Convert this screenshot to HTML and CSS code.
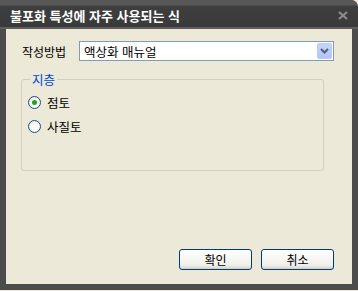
FILE: index.html
```html
<!DOCTYPE html>
<html lang="ko">
<head>
    <meta charset="UTF-8">
    <title>불포화 특성에 자주 사용되는 식</title>
    <link rel="stylesheet" href="styles.css">
</head>
<body>
    <div class="window">
        <div class="titlebar">
            <span class="title">불포화 특성에 자주 사용되는 식</span>
            <svg class="close" width="10" height="9" viewBox="0 0 10 9"><path d="M1 1 L9 8 M9 1 L1 8" stroke="#8c8c8c" stroke-width="2.2"/></svg>
        </div>
        <div class="client">
            <div class="row">
                <span class="label">작성방법</span>
                <div class="combo">
                    <span class="combo-text">액상화 매뉴얼</span>
                    <span class="combo-btn">
                        <svg width="9" height="6" viewBox="0 0 9 6"><path d="M1 1 L4.5 4.5 L8 1" fill="none" stroke="#4d6185" stroke-width="2"/></svg>
                    </span>
                </div>
            </div>
            <fieldset class="group">
                <legend>지층</legend>
                <label class="radio"><span class="dot on"></span>점토</label>
                <label class="radio"><span class="dot"></span>사질토</label>
            </fieldset>
            <div class="buttons">
                <button class="btn">확인</button>
                <button class="btn">취소</button>
            </div>
        </div>
    </div>
</body>
</html>
```

FILE: styles.css
```css
html, body {
    margin: 0;
    padding: 0;
}
body {
    background: #ece9d8;
    font-family: "Noto Sans CJK KR", "Noto Sans", sans-serif;
    font-size: 12px;
    color: #000;
}
.window {
    width: 358px;
    height: 290px;
    background: #4c4c4c;
    border-radius: 0 7px 0 0;
    display: flex;
    flex-direction: column;
}
.titlebar {
    height: 29px;
    box-sizing: border-box;
    border-bottom: 2px solid #5e5e5e;
    background: linear-gradient(#585858 0, #585858 5px, #3e3e3e 6px, #3a3a3a 100%);
    border-radius: 0 7px 0 0;
    display: flex;
    align-items: center;
    padding: 3px 10px 0 10px;
}
.title {
    color: #fff;
    font-weight: bold;
    font-size: 13px;
    flex: 1;
}
.client {
    margin: 0 6px;
    height: 255px;
    background: #ece9d8;
    display: flex;
    flex-direction: column;
    padding: 12px 18px 14px 15px;
    box-sizing: border-box;
}
.row {
    display: flex;
    align-items: center;
    height: 20px;
}
.label {
    width: 57px;
    padding-left: 1px;
}
.combo {
    flex: 1;
    height: 20px;
    box-sizing: border-box;
    border: 1px solid #7f9db9;
    background: #fff;
    display: flex;
    align-items: center;
    padding: 1px;
}
.combo-text {
    flex: 1;
    padding-left: 3px;
    font-size: 12.5px;
}
.combo-btn {
    width: 15px;
    height: 16px;
    box-sizing: border-box;
    border: 1px solid #bccbf3;
    border-radius: 2px;
    background: linear-gradient(#c6d4fb, #b2c4f8);
    display: flex;
    align-items: center;
    justify-content: center;
}
.group {
    margin: 9px 10px 0 0;
    padding: 1px 8px 0 6px;
    height: 101px;
    box-sizing: border-box;
    border: 1px solid #d0d0bf;
    border-radius: 3px;
}
.group legend {
    color: #0046d5;
    padding: 0 2px;
    margin-left: 2px;
    font-size: 12.5px;
}
.radio {
    display: flex;
    align-items: center;
    height: 24px;
    font-size: 12.5px;
}
.dot {
    width: 11px;
    height: 11px;
    border: 1px solid #1c5180;
    border-radius: 50%;
    background: radial-gradient(circle at 60% 60%, #fff 30%, #dcdcd4 100%);
    margin-right: 6px;
    display: flex;
    align-items: center;
    justify-content: center;
}
.dot.on::after {
    content: "";
    width: 5px;
    height: 5px;
    border-radius: 50%;
    background: #21a121;
}
.buttons {
    margin-top: auto;
    display: flex;
    justify-content: flex-end;
    gap: 9px;
}
.btn {
    width: 73px;
    height: 21px;
    font-family: inherit;
    font-size: 12px;
    border: 1px solid #003c74;
    border-radius: 3px;
    background: linear-gradient(#fff, #f0f0ea 80%, #d6d0c5);
    padding: 0;
}
```
